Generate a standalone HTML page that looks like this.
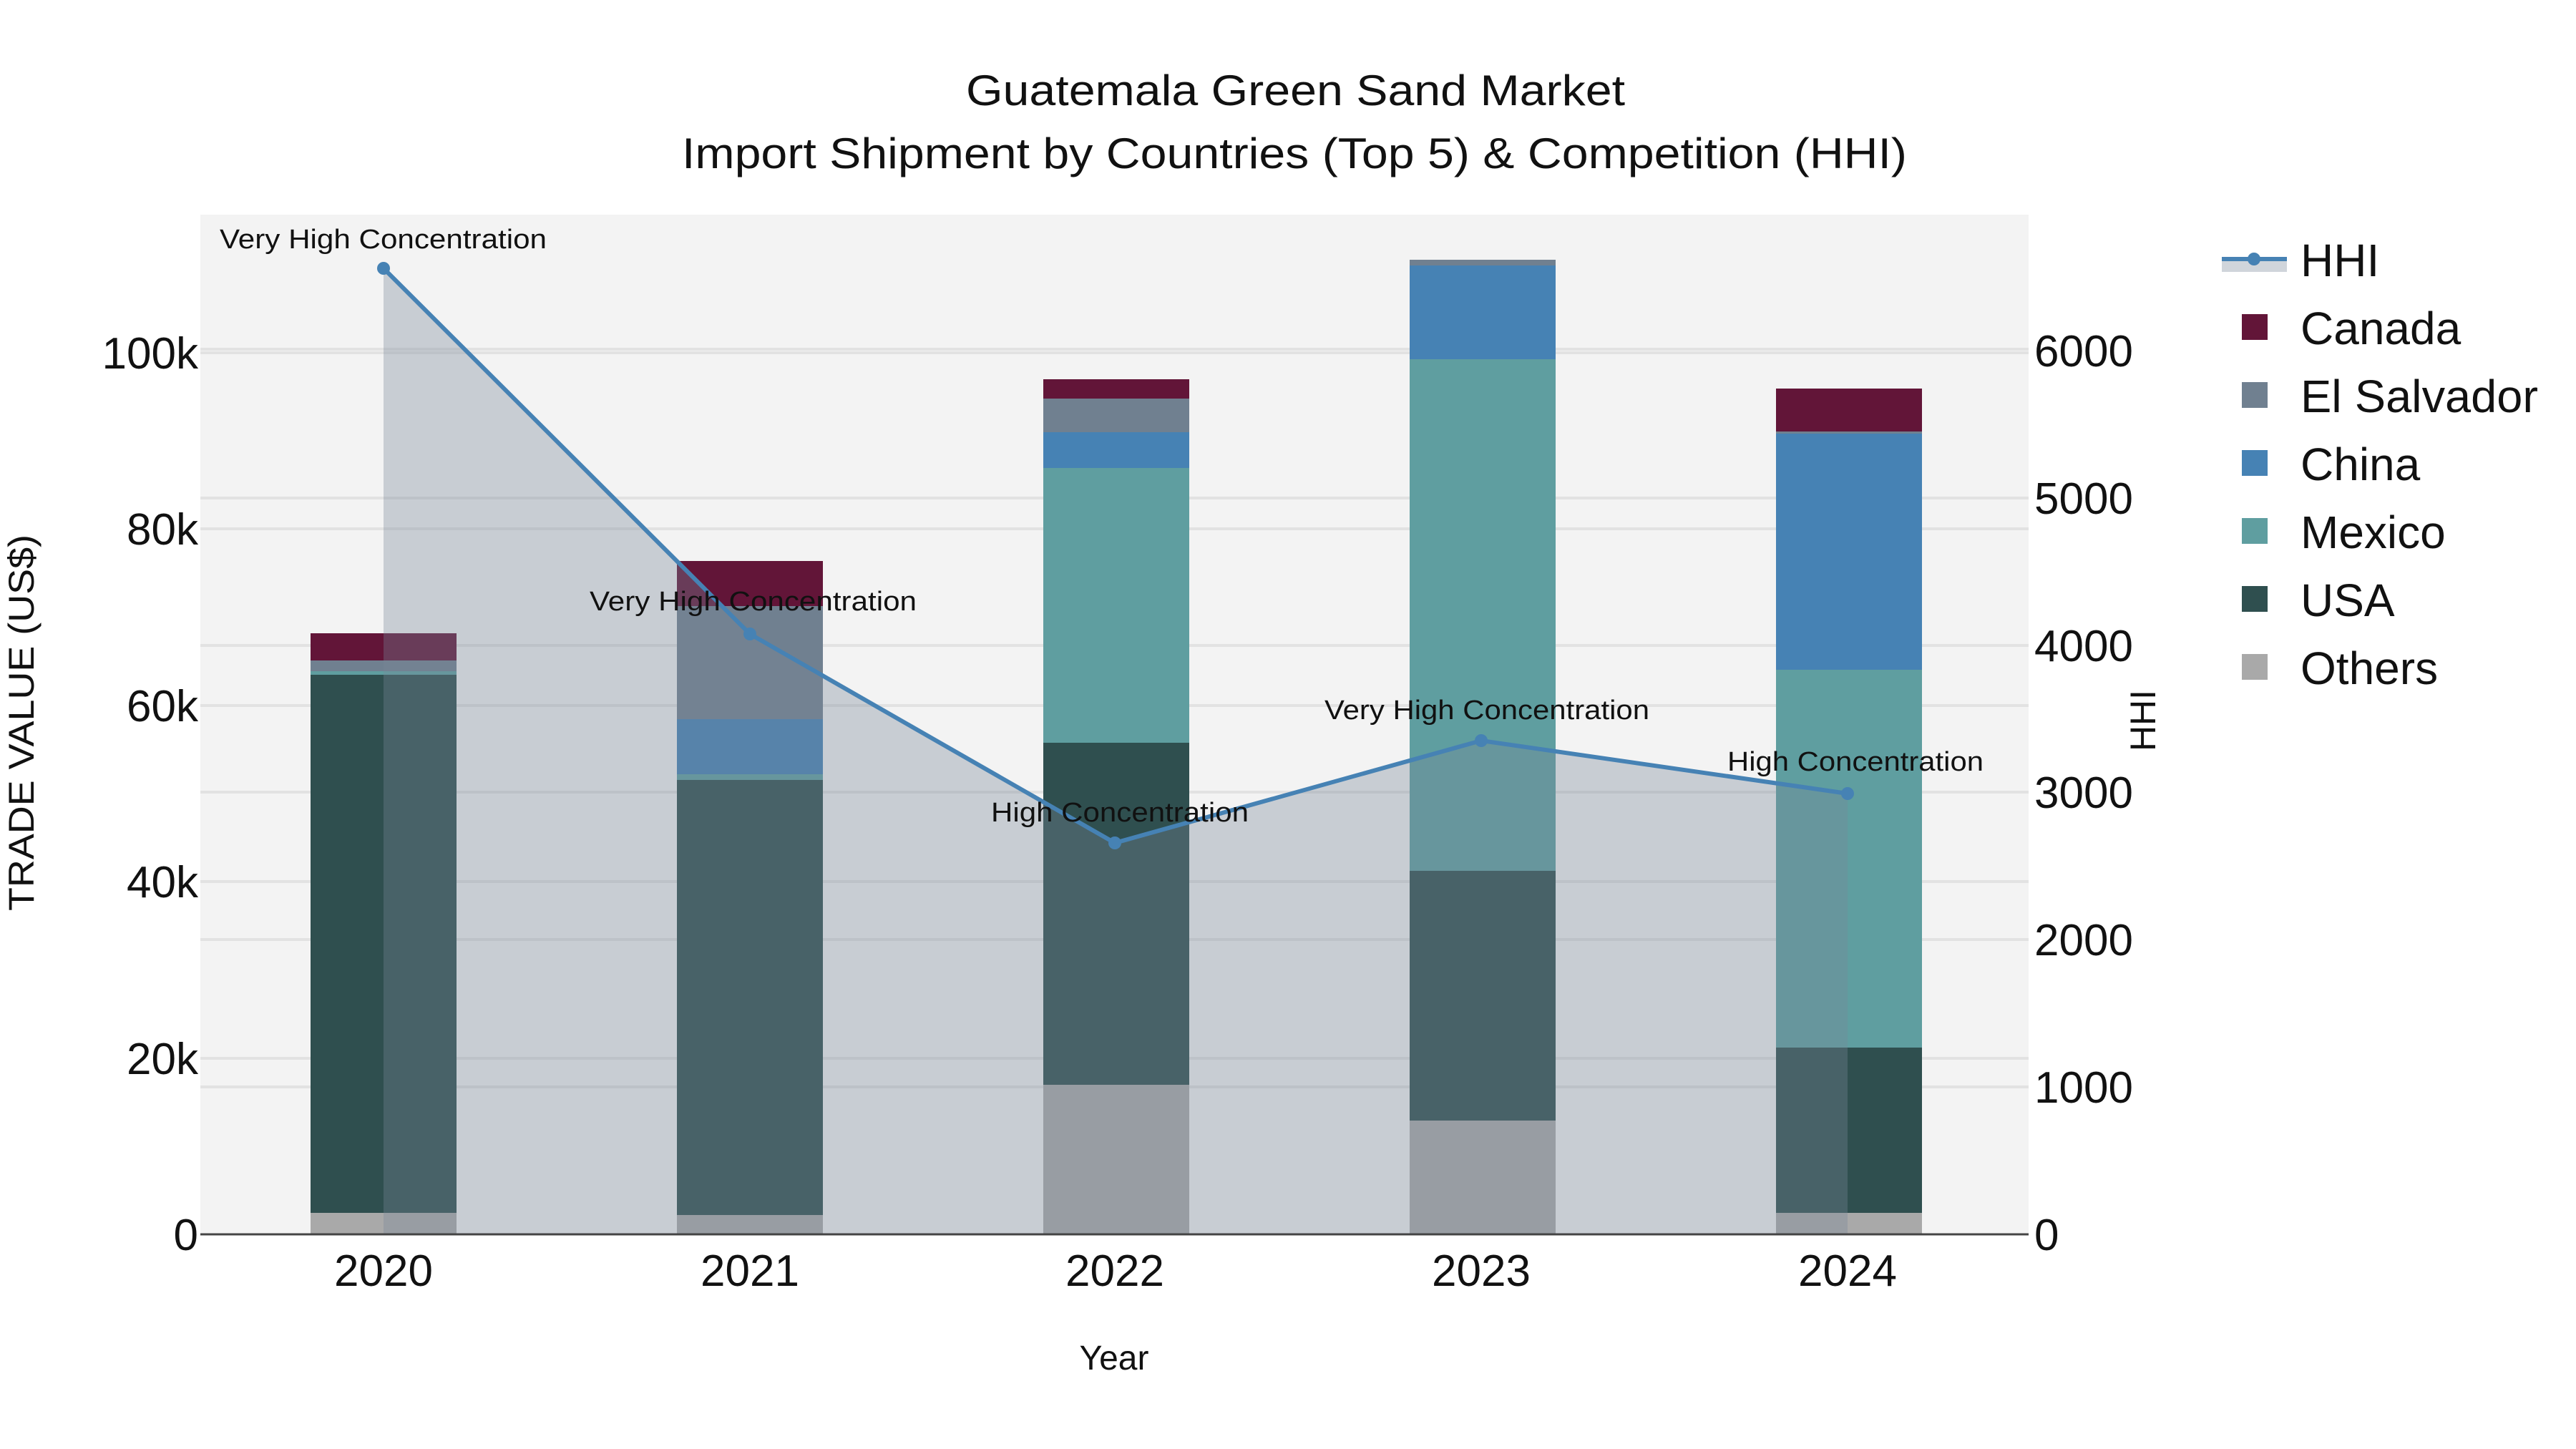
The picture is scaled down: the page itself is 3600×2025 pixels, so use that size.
<!DOCTYPE html>
<html><head><meta charset="utf-8"><style>
html,body{margin:0;padding:0;background:#fff;}
svg{display:block;}
text{font-family:"Liberation Sans",sans-serif;fill:#111;}
</style></head><body>
<svg width="3600" height="2025" viewBox="0 0 3600 2025" xmlns="http://www.w3.org/2000/svg">
<rect x="0" y="0" width="3600" height="2025" fill="#fff"/>
<g transform="translate(0,-8)">
<rect x="280" y="308" width="2555" height="1425" fill="#f3f3f3"/>
<g stroke="#e2e2e2" stroke-width="4">
<line x1="280" x2="2835" y1="1487" y2="1487"/><line x1="280" x2="2835" y1="1240" y2="1240"/>
<line x1="280" x2="2835" y1="994" y2="994"/><line x1="280" x2="2835" y1="747" y2="747"/>
<line x1="280" x2="2835" y1="501" y2="501"/>
<line x1="280" x2="2835" y1="1527" y2="1527"/><line x1="280" x2="2835" y1="1321" y2="1321"/>
<line x1="280" x2="2835" y1="1115" y2="1115"/><line x1="280" x2="2835" y1="910" y2="910"/>
<line x1="280" x2="2835" y1="704" y2="704"/><line x1="280" x2="2835" y1="496" y2="496"/>
</g>
<g>
<rect x="434" y="1703" width="204" height="30" fill="#a9a9a9"/>
<rect x="434" y="951" width="204" height="752" fill="#2f4f4f"/>
<rect x="434" y="946" width="204" height="5" fill="#5f9ea0"/>
<rect x="434" y="931" width="204" height="15" fill="#708090"/>
<rect x="434" y="893" width="204" height="38" fill="#621538"/>
<rect x="946" y="1706" width="204" height="27" fill="#a9a9a9"/>
<rect x="946" y="1098" width="204" height="608" fill="#2f4f4f"/>
<rect x="946" y="1090" width="204" height="8" fill="#5f9ea0"/>
<rect x="946" y="1013" width="204" height="77" fill="#4682b4"/>
<rect x="946" y="855" width="204" height="158" fill="#708090"/>
<rect x="946" y="792" width="204" height="63" fill="#621538"/>
<rect x="1458" y="1524" width="204" height="209" fill="#a9a9a9"/>
<rect x="1458" y="1046" width="204" height="478" fill="#2f4f4f"/>
<rect x="1458" y="662" width="204" height="384" fill="#5f9ea0"/>
<rect x="1458" y="612" width="204" height="50" fill="#4682b4"/>
<rect x="1458" y="565" width="204" height="47" fill="#708090"/>
<rect x="1458" y="538" width="204" height="27" fill="#621538"/>
<rect x="1970" y="1574" width="204" height="159" fill="#a9a9a9"/>
<rect x="1970" y="1225" width="204" height="349" fill="#2f4f4f"/>
<rect x="1970" y="510" width="204" height="715" fill="#5f9ea0"/>
<rect x="1970" y="379" width="204" height="131" fill="#4682b4"/>
<rect x="1970" y="371" width="204" height="8" fill="#708090"/>
<rect x="2482" y="1703" width="204" height="30" fill="#a9a9a9"/>
<rect x="2482" y="1472" width="204" height="231" fill="#2f4f4f"/>
<rect x="2482" y="944" width="204" height="528" fill="#5f9ea0"/>
<rect x="2482" y="614" width="204" height="330" fill="#4682b4"/>
<rect x="2482" y="611" width="204" height="3" fill="#708090"/>
<rect x="2482" y="551" width="204" height="60" fill="#621538"/>
</g>
<polygon points="536,383 1048,894 1558,1186 2070,1043 2582,1117 2582,1733 536,1733" fill="#778899" fill-opacity="0.35"/>
<polyline points="536,383 1048,894 1558,1186 2070,1043 2582,1117" fill="none" stroke="#4682b4" stroke-width="6"/>
<g fill="#4682b4"><circle cx="536" cy="383" r="9"/><circle cx="1048" cy="894" r="9"/><circle cx="1558" cy="1186" r="9"/><circle cx="2070" cy="1043" r="9"/><circle cx="2582" cy="1117" r="9"/></g>
<line x1="280" x2="2835" y1="1733" y2="1733" stroke="#444" stroke-width="3"/>
<g font-size="38">
<text x="307" y="355" textLength="457" lengthAdjust="spacingAndGlyphs">Very High Concentration</text>
<text x="824" y="861" textLength="457" lengthAdjust="spacingAndGlyphs">Very High Concentration</text>
<text x="1385" y="1156" textLength="360" lengthAdjust="spacingAndGlyphs">High Concentration</text>
<text x="1851" y="1013" textLength="454" lengthAdjust="spacingAndGlyphs">Very High Concentration</text>
<text x="2414" y="1085" textLength="358" lengthAdjust="spacingAndGlyphs">High Concentration</text>
</g>
<g font-size="62" text-anchor="end">
<text x="277" y="1755">0</text>
<text x="277" y="1509">20k</text>
<text x="277" y="1262">40k</text>
<text x="277" y="1016">60k</text>
<text x="277" y="769">80k</text>
<text x="277" y="523">100k</text>
</g>
<g font-size="62" text-anchor="start">
<text x="2843" y="1755">0</text>
<text x="2843" y="1549">1000</text>
<text x="2843" y="1343">2000</text>
<text x="2843" y="1137">3000</text>
<text x="2843" y="932">4000</text>
<text x="2843" y="726">5000</text>
<text x="2843" y="520">6000</text>
</g>
<g font-size="62" text-anchor="middle">
<text x="536" y="1805">2020</text>
<text x="1048" y="1805">2021</text>
<text x="1558" y="1805">2022</text>
<text x="2070" y="1805">2023</text>
<text x="2582" y="1805">2024</text>
</g>
<text x="1557" y="1922" font-size="48" text-anchor="middle">Year</text>
<text transform="translate(47,1018) rotate(-90)" font-size="50" text-anchor="middle" textLength="526" lengthAdjust="spacingAndGlyphs">TRADE VALUE (US$)</text>
<text transform="translate(3012,1015) rotate(-90)" font-size="50" text-anchor="middle">HHI</text>
</g>
<g font-size="60" text-anchor="start">
<text x="1350" y="147" textLength="921" lengthAdjust="spacingAndGlyphs">Guatemala Green Sand Market</text>
<text x="953" y="235" textLength="1712" lengthAdjust="spacingAndGlyphs">Import Shipment by Countries (Top 5) &amp; Competition (HHI)</text>
</g>
<rect x="3105" y="362" width="91" height="18" fill="#778899" fill-opacity="0.35"/>
<line x1="3105" x2="3196" y1="362" y2="362" stroke="#4682b4" stroke-width="6"/>
<circle cx="3150" cy="362" r="9" fill="#4682b4"/>
<rect x="3133" y="439" width="36" height="36" fill="#621538"/>
<rect x="3133" y="534" width="36" height="36" fill="#708090"/>
<rect x="3133" y="629" width="36" height="36" fill="#4682b4"/>
<rect x="3133" y="724" width="36" height="36" fill="#5f9ea0"/>
<rect x="3133" y="819" width="36" height="36" fill="#2f4f4f"/>
<rect x="3133" y="914" width="36" height="36" fill="#a9a9a9"/>
<g font-size="64">
<text x="3215" y="386">HHI</text>
<text x="3215" y="481">Canada</text>
<text x="3215" y="576" textLength="332" lengthAdjust="spacingAndGlyphs">El Salvador</text>
<text x="3215" y="671">China</text>
<text x="3215" y="766">Mexico</text>
<text x="3215" y="861">USA</text>
<text x="3215" y="956">Others</text>
</g>
</svg>
</body></html>
